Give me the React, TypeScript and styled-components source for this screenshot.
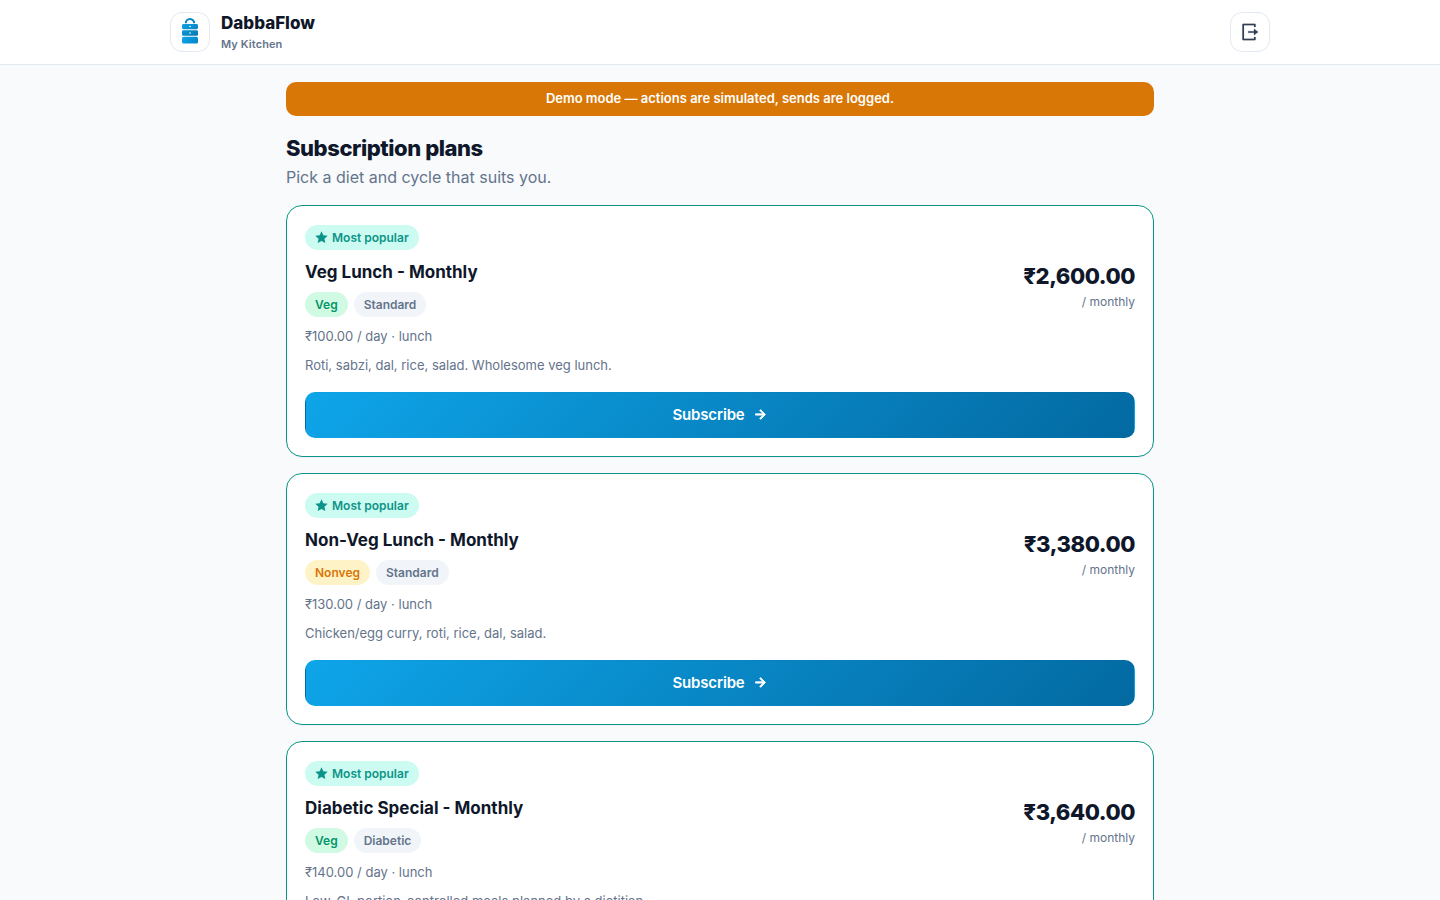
import React from 'react';
import styled, { createGlobalStyle } from 'styled-components';
import { RiArrowRightLine, RiLogoutBoxRLine, RiStarFill } from 'react-icons/ri';

const GlobalStyle = createGlobalStyle`
  *, *::before, *::after { box-sizing: border-box; }
  body {
    margin: 0;
    background: #f8fafc;
    color: #0f172a;
    font-family: Inter, "Noto Sans", sans-serif;
    font-size: 16px;
  }
  h1, h2, p { margin: 0; }
`;

const Header = styled.header`
  background: #fff;
  border-bottom: 1px solid #e2e8f0;
`;

const HeaderInner = styled.div`
  display: flex;
  align-items: center;
  justify-content: space-between;
  max-width: 1132px;
  margin: 0 auto;
  padding: 12px 16px;
`;

const Brand = styled.a`
  display: flex;
  align-items: center;
  gap: 11px;
  color: inherit;
  text-decoration: none;
`;

const LogoTile = styled.span`
  display: grid;
  place-items: center;
  width: 40px;
  height: 40px;
  border: 1px solid #e2e8f0;
  border-radius: 12px;
  background: #fff;
`;

const BrandText = styled.span`
  display: flex;
  flex-direction: column;
  gap: 2px;
`;

const BrandName = styled.span`
  font-size: 17px;
  font-weight: 800;
  line-height: 22px;
`;

const BrandSub = styled.span`
  color: #64748b;
  font-size: 11px;
  font-weight: 600;
  letter-spacing: 0.01em;
  line-height: 16px;
`;

const IconButton = styled.button`
  display: grid;
  place-items: center;
  width: 40px;
  height: 40px;
  padding: 0 2px 0 0;
  border: 1px solid #e2e8f0;
  border-radius: 12px;
  background: #fff;
  color: #334155;
  font-size: 20px;
  cursor: pointer;
`;

const Main = styled.main`
  max-width: 900px;
  margin: 0 auto;
  padding: 17px 16px 32px;
`;

const Banner = styled.div`
  padding: 7px 16px 9px;
  border-radius: 10px;
  background: #d97706;
  color: #fff;
  font-size: 13px;
  font-weight: 600;
  line-height: 18px;
  text-align: center;
`;

const PageTitle = styled.h1`
  margin-top: 16px;
  font-size: 22px;
  font-weight: 800;
  letter-spacing: -0.02em;
  line-height: 32px;
`;

const PageLead = styled.p`
  margin-bottom: 14px;
  color: #64748b;
  font-size: 16px;
  line-height: 27px;
`;

const PlanList = styled.div`
  display: grid;
  gap: 16px;
`;

const Card = styled.article`
  padding: 19px 18px 18px;
  border: 1px solid #0d9488;
  border-radius: 16px;
  background: #fff;
  box-shadow: 0 1px 2px rgba(15, 23, 42, 0.04);
`;

const tones = {
  popular: { bg: '#ccfbf1', fg: '#0d9488' },
  veg: { bg: '#d1fae5', fg: '#059669' },
  nonveg: { bg: '#fef3c7', fg: '#d97706' },
  neutral: { bg: '#f1f5f9', fg: '#64748b' },
};

type Tone = keyof typeof tones;

const Badge = styled.span<{ $tone: Tone }>`
  display: inline-flex;
  align-items: center;
  gap: 4px;
  padding: 4px 10px;
  border-radius: 999px;
  background: ${({ $tone }) => tones[$tone].bg};
  color: ${({ $tone }) => tones[$tone].fg};
  font-size: 12px;
  font-weight: 600;
  line-height: 17px;
`;

const BadgeRow = styled.div`
  display: flex;
  gap: 6px;
`;

const PlanHead = styled.div`
  display: flex;
  align-items: flex-start;
  justify-content: space-between;
  gap: 16px;
  margin-top: 8px;
`;

const PlanName = styled.h2`
  margin-bottom: 6px;
  font-size: 17px;
  font-weight: 700;
  line-height: 28px;
`;

const PriceBlock = styled.div`
  text-align: right;
`;

const Price = styled.div`
  font-size: 22px;
  font-weight: 800;
  letter-spacing: -0.02em;
  line-height: 36px;
`;

const Cycle = styled.div`
  color: #64748b;
  font-size: 12px;
  line-height: 15px;
`;

const DailyRate = styled.p`
  margin-top: 9px;
  color: #64748b;
  font-size: 13px;
  line-height: 21px;
`;

const Description = styled(DailyRate)`
  margin-top: 8px;
`;

const SubscribeButton = styled.button`
  display: flex;
  align-items: center;
  justify-content: center;
  gap: 8px;
  width: 100%;
  height: 46px;
  margin-top: 16px;
  padding: 0 16px 2px;
  border: 1px solid transparent;
  border-radius: 10px;
  background: linear-gradient(135deg, #0ea5e9, #0369a1);
  color: #fff;
  font-family: inherit;
  font-size: 15px;
  font-weight: 600;
  letter-spacing: -0.01em;
  cursor: pointer;
`;

interface Plan {
  name: string;
  diet: 'veg' | 'nonveg';
  dietLabel: string;
  kind: string;
  price: string;
  perDay: string;
  description: string;
}

const plans: Plan[] = [
  {
    name: 'Veg Lunch - Monthly',
    diet: 'veg',
    dietLabel: 'Veg',
    kind: 'Standard',
    price: '₹2,600.00',
    perDay: '₹100.00',
    description: 'Roti, sabzi, dal, rice, salad. Wholesome veg lunch.',
  },
  {
    name: 'Non-Veg Lunch - Monthly',
    diet: 'nonveg',
    dietLabel: 'Nonveg',
    kind: 'Standard',
    price: '₹3,380.00',
    perDay: '₹130.00',
    description: 'Chicken/egg curry, roti, rice, dal, salad.',
  },
  {
    name: 'Diabetic Special - Monthly',
    diet: 'veg',
    dietLabel: 'Veg',
    kind: 'Diabetic',
    price: '₹3,640.00',
    perDay: '₹140.00',
    description: 'Low-GI, portion-controlled meals planned by a dietitian.',
  },
];

function TiffinLogo() {
  return (
    <svg width="28" height="28" viewBox="0 0 28 28" fill="none" aria-hidden="true">
      <defs>
        <linearGradient id="tiffin" x1="6" y1="4" x2="22" y2="26" gradientUnits="userSpaceOnUse">
          <stop stopColor="#0ea5e9" />
          <stop offset="1" stopColor="#0369a1" />
        </linearGradient>
        <linearGradient id="tiffinBase" x1="6" y1="19" x2="22" y2="26" gradientUnits="userSpaceOnUse">
          <stop stopColor="#0ea5e9" />
          <stop offset="1" stopColor="#0284c7" />
        </linearGradient>
      </defs>
      <path d="M9.8 5.2a4.2 4.2 0 0 1 8.4 0" stroke="#0284c7" strokeWidth="2" />
      <rect x="6" y="6" width="16" height="5.2" rx="1.4" fill="url(#tiffin)" />
      <rect x="6" y="12.2" width="16" height="5.6" rx="1.4" fill="url(#tiffin)" />
      <rect x="6" y="18.8" width="16" height="6.8" rx="1.6" fill="url(#tiffinBase)" />
      <circle cx="14" cy="8.5" r="0.8" fill="#fff" />
      <circle cx="14" cy="15" r="0.8" fill="#fff" />
    </svg>
  );
}

function PlanCard({ plan }: { plan: Plan }) {
  return (
    <Card>
      <BadgeRow>
        <Badge $tone="popular">
          <RiStarFill size={13} aria-hidden />
          Most popular
        </Badge>
      </BadgeRow>
      <PlanHead>
        <div>
          <PlanName>{plan.name}</PlanName>
          <BadgeRow>
            <Badge $tone={plan.diet}>{plan.dietLabel}</Badge>
            <Badge $tone="neutral">{plan.kind}</Badge>
          </BadgeRow>
          <DailyRate>{plan.perDay} / day · lunch</DailyRate>
        </div>
        <PriceBlock>
          <Price>{plan.price}</Price>
          <Cycle>/ monthly</Cycle>
        </PriceBlock>
      </PlanHead>
      <Description>{plan.description}</Description>
      <SubscribeButton type="button">
        Subscribe
        <RiArrowRightLine size={15} strokeWidth={1.4} aria-hidden />
      </SubscribeButton>
    </Card>
  );
}

export default function App() {
  return (
    <>
      <GlobalStyle />
      <Header>
        <HeaderInner>
          <Brand href="#">
            <LogoTile>
              <TiffinLogo />
            </LogoTile>
            <BrandText>
              <BrandName>DabbaFlow</BrandName>
              <BrandSub>My Kitchen</BrandSub>
            </BrandText>
          </Brand>
          <IconButton type="button" aria-label="Log out">
            <RiLogoutBoxRLine strokeWidth={0.2} aria-hidden />
          </IconButton>
        </HeaderInner>
      </Header>
      <Main>
        <Banner role="status">Demo mode — actions are simulated, sends are logged.</Banner>
        <PageTitle>Subscription plans</PageTitle>
        <PageLead>Pick a diet and cycle that suits you.</PageLead>
        <PlanList>
          {plans.map((plan) => (
            <PlanCard key={plan.name} plan={plan} />
          ))}
        </PlanList>
      </Main>
    </>
  );
}
